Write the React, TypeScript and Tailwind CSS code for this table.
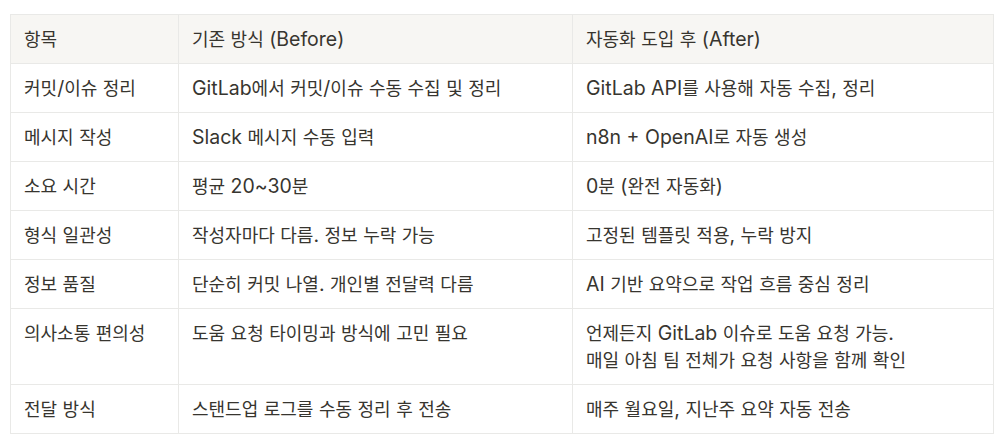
import React from "react";

const rows: [string, string, string[]][] = [
  ["커밋/이슈 정리", "GitLab에서 커밋/이슈 수동 수집 및 정리", ["GitLab API를 사용해 자동 수집, 정리"]],
  ["메시지 작성", "Slack 메시지 수동 입력", ["n8n + OpenAI로 자동 생성"]],
  ["소요 시간", "평균 20~30분", ["0분 (완전 자동화)"]],
  ["형식 일관성", "작성자마다 다름. 정보 누락 가능", ["고정된 템플릿 적용, 누락 방지"]],
  ["정보 품질", "단순히 커밋 나열. 개인별 전달력 다름", ["AI 기반 요약으로 작업 흐름 중심 정리"]],
  ["의사소통 편의성", "도움 요청 타이밍과 방식에 고민 필요", ["언제든지 GitLab 이슈로 도움 요청 가능.", "매일 아침 팀 전체가 요청 사항을 함께 확인"]],
  ["전달 방식", "스탠드업 로그를 수동 정리 후 전송", ["매주 월요일, 지난주 요약 자동 전송"]],
];

function T({ s }: { s: string }) {
  const parts = s.split(/([\uAC00-\uD7A3]+)/);
  return (
    <>
      {parts.map((p, i) =>
        /[\uAC00-\uD7A3]/.test(p) ? (
          <span key={i} className="text-[18px] leading-[18px]" style={{ fontFamily: '"Noto Sans CJK KR", sans-serif' }}>
            {p}
          </span>
        ) : (
          <span key={i} className="leading-[18px]">{p}</span>
        )
      )}
    </>
  );
}

const cell = "border-r border-b border-[#e9e9e7] pl-[13px] pr-[10px] pt-[11px] pb-[10px]";

export default function App() {
  return (
    <div
      className="w-[1008px] h-[448px] bg-white pt-[14px] pl-[10px] text-[#37352f] text-[19.5px] leading-[27px]"
      style={{ fontFamily: 'Inter, "Noto Sans CJK KR", sans-serif' }}
    >
      <div className="grid grid-cols-[168px_394px_421px] w-[984px] border-l border-t border-[#e9e9e7]">
        <div className={`${cell} bg-[#f7f6f3]`}><T s="항목" /></div>
        <div className={`${cell} bg-[#f7f6f3]`}><T s="기존 방식 (Before)" /></div>
        <div className={`${cell} bg-[#f7f6f3]`}><T s="자동화 도입 후 (After)" /></div>
        {rows.map(([a, b, c], i) => (
          <React.Fragment key={i}>
            <div className={cell}><T s={a} /></div>
            <div className={cell}><T s={b} /></div>
            <div className={cell}>
              {c.map((l, j) => (
                <div key={j}><T s={l} /></div>
              ))}
            </div>
          </React.Fragment>
        ))}
      </div>
    </div>
  );
}
